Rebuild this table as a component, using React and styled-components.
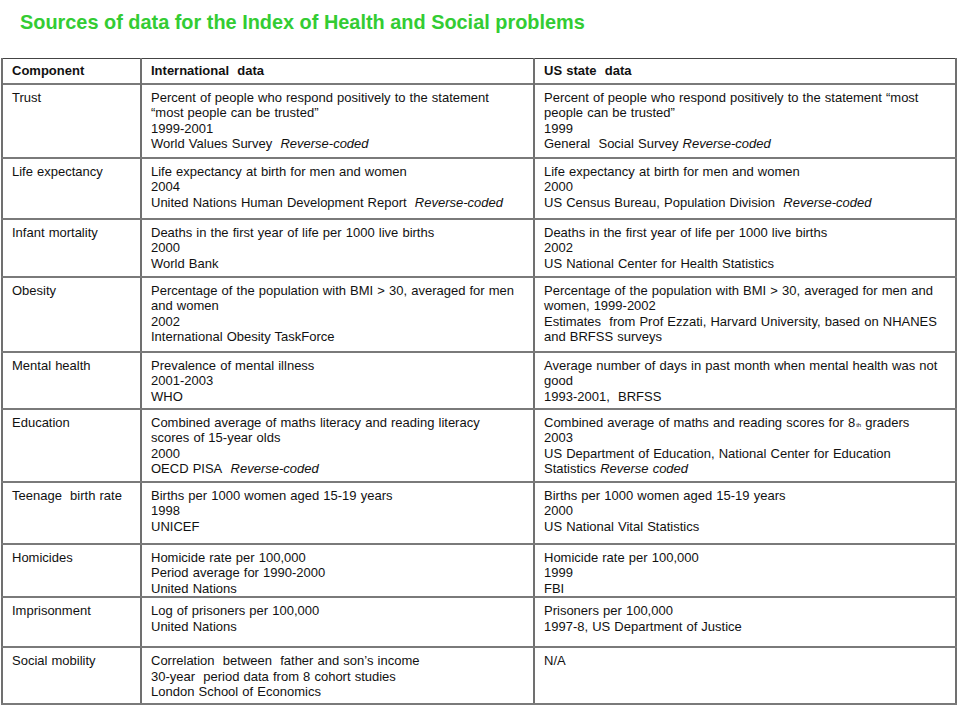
import React from 'react';
import styled, { createGlobalStyle } from 'styled-components';

const GlobalStyle = createGlobalStyle`
  body {
    margin: 0;
    background: #ffffff;
    font-family: "Liberation Sans", Arial, sans-serif;
  }
`;

const Page = styled.div`
  width: 960px;
  height: 720px;
  overflow: hidden;
  padding-left: 1px;
  box-sizing: border-box;
`;

const Title = styled.h1`
  margin: 0;
  padding: 11px 0 0 19px;
  height: 58px;
  box-sizing: border-box;
  font-size: 19.9px;
  font-weight: bold;
  color: #33cc33;
`;

const Table = styled.table`
  width: 956px;
  table-layout: fixed;
  border-collapse: collapse;
  font-size: 13px;
  color: #111;
  word-spacing: 0.5px;
`;

const Row = styled.tr`
  height: ${({ h }) => h}px;
`;

const Cell = styled.td`
  vertical-align: top;
  padding: ${({ head }) => (head ? '4px' : '5px')} 12px 0 9px;
  line-height: 15.5px;
  border-left: 2px solid #707070;
  border-right: 2px solid #707070;
  border-top: ${({ head }) => (head ? '1px solid #444' : '2px solid #7a7a7a')};
  border-bottom: ${({ head }) => (head ? '1px solid #222' : '2px solid #7a7a7a')};
  font-weight: ${({ head }) => (head ? 'bold' : 'normal')};
`;

const Note = styled.i`
  font-style: italic;
`;

const Sup = styled.sup`
  font-size: 6px;
  line-height: 0;
  vertical-align: 0;
  margin-left: 1px;
`;

const Line = styled.div``;

const rows = [
  {
    h: 74,
    name: 'Trust',
    intl: [
      'Percent of people who respond positively to the statement',
      '\u201cmost people can be trusted\u201d',
      '1999-2001',
      <>World Values Survey&nbsp; <Note>Reverse-coded</Note></>,
    ],
    us: [
      'Percent of people who respond positively to the statement \u201cmost people can be trusted\u201d',
      '1999',
      <>General&nbsp; Social Survey <Note>Reverse-coded</Note></>,
    ],
  },
  {
    h: 61,
    name: 'Life expectancy',
    intl: [
      'Life expectancy at birth for men and women',
      '2004',
      <>United Nations Human Development Report&nbsp; <Note>Reverse-coded</Note></>,
    ],
    us: [
      'Life expectancy at birth for men and women',
      '2000',
      <>US Census Bureau, Population Division&nbsp; <Note>Reverse-coded</Note></>,
    ],
  },
  {
    h: 58,
    name: 'Infant mortality',
    intl: ['Deaths in the first year of life per 1000 live births', '2000', 'World Bank'],
    us: ['Deaths in the first year of life per 1000 live births', '2002', 'US National Center for Health Statistics'],
  },
  {
    h: 75,
    name: 'Obesity',
    intl: [
      'Percentage of the population with BMI > 30, averaged for men and women',
      '2002',
      'International Obesity TaskForce',
    ],
    us: [
      'Percentage of the population with BMI > 30, averaged for men and women, 1999-2002',
      'Estimates\u00a0 from Prof Ezzati, Harvard University, based on NHANES and BRFSS surveys',
    ],
  },
  {
    h: 57,
    name: 'Mental health',
    intl: ['Prevalence of mental illness', '2001-2003', 'WHO'],
    us: ['Average number of days in past month when mental health was not good', '1993-2001,\u00a0 BRFSS'],
  },
  {
    h: 73,
    name: 'Education',
    intl: [
      'Combined average of maths literacy and reading literacy scores of 15-year olds',
      '2000',
      <>OECD PISA&nbsp; <Note>Reverse-coded</Note></>,
    ],
    us: [
      <>Combined average of maths and reading scores for 8<Sup>th</Sup> graders</>,
      '2003',
      <>US Department of Education, National Center for Education Statistics <Note>Reverse coded</Note></>,
    ],
  },
  {
    h: 62,
    name: 'Teenage\u00a0 birth rate',
    intl: ['Births per 1000 women aged 15-19 years', '1998', 'UNICEF'],
    us: ['Births per 1000 women aged 15-19 years', '2000', 'US National Vital Statistics'],
  },
  {
    h: 53,
    name: 'Homicides',
    intl: ['Homicide rate per 100,000', 'Period average for 1990-2000', 'United Nations'],
    us: ['Homicide rate per 100,000', '1999', 'FBI'],
  },
  {
    h: 50,
    name: 'Imprisonment',
    intl: ['Log of prisoners per 100,000', 'United Nations'],
    us: ['Prisoners per 100,000', '1997-8, US Department of Justice'],
  },
  {
    h: 57,
    name: 'Social mobility',
    intl: [
      'Correlation\u00a0 between\u00a0 father and son\u2019s income',
      '30-year\u00a0 period data from 8 cohort studies',
      'London School of Economics',
    ],
    us: ['N/A'],
  },
];

const Lines = ({ items }) => items.map((t, i) => <Line key={i}>{t}</Line>);

export default function App() {
  return (
    <Page>
      <GlobalStyle />
      <Title>Sources of data for the Index of Health and Social problems</Title>
      <Table>
        <colgroup>
          <col style={{ width: 139 }} />
          <col style={{ width: 393 }} />
          <col />
        </colgroup>
        <tbody>
          <Row h={25}>
            <Cell head>Component</Cell>
            <Cell head>International&nbsp; data</Cell>
            <Cell head>US state&nbsp; data</Cell>
          </Row>
          {rows.map((r) => (
            <Row key={r.name} h={r.h}>
              <Cell>{r.name}</Cell>
              <Cell><Lines items={r.intl} /></Cell>
              <Cell><Lines items={r.us} /></Cell>
            </Row>
          ))}
        </tbody>
      </Table>
    </Page>
  );
}
